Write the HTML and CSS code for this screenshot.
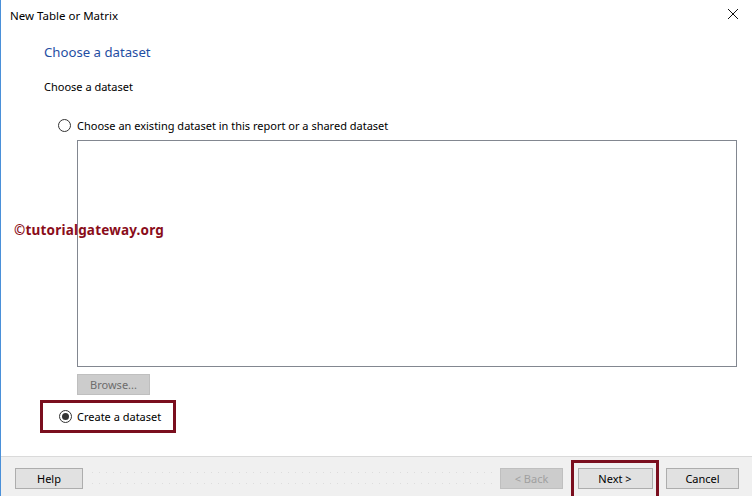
FILE: index.html
```html
<!DOCTYPE html>
<html>
<head>
<meta charset="utf-8">
<link rel="stylesheet" href="styles.css">
</head>
<body>
<div class="dialog">
  <div class="titlebar">
    <span class="title">New Table or Matrix</span>
    <svg class="close" width="12" height="12" viewBox="0 0 12 12"><path d="M1 1 L11 11 M11 1 L1 11" stroke="#111" stroke-width="1" fill="none"/></svg>
  </div>
  <div class="content">
    <div class="heading">Choose a dataset</div>
    <div class="sub">Choose a dataset</div>
    <div class="opt opt1">
      <span class="radio"></span>
      <span class="label">Choose an existing dataset in this report or a shared dataset</span>
    </div>
    <div class="listbox"></div>
    <div class="browse">Browse...</div>
    <div class="redbox">
      <span class="radio checked"></span>
      <span class="label">Create a dataset</span>
    </div>
    <div class="watermark">©tutorialgateway.org</div>
  </div>
  <div class="footer">
    <div class="btn help">Help</div>
    <div class="dots"></div>
    <div class="btn back disabled">&lt; Back</div>
    <div class="nextwrap"><div class="btn next">Next &gt;</div></div>
    <div class="btn cancel">Cancel</div>
  </div>
</div>
</body>
</html>
```
FILE: styles.css
```css
html, body { margin: 0; padding: 0; }
body { width: 752px; height: 496px; overflow: hidden; background: #fff; font-family: "Noto Sans", "Open Sans", sans-serif; color: #000; }
.dialog { width: 752px; height: 496px; display: flex; flex-direction: column; box-sizing: border-box; border-left: 1px solid #4a90d9; position: relative; }
.titlebar { height: 30px; flex: none; display: flex; align-items: center; justify-content: space-between; padding: 0 13px 0 9px; }
.title { font-size: 11.5px; }
.close { display: block; margin-top: -2px; }
.content { flex: 1; position: relative; padding: 13px 0 0 43px; }
.heading { font-size: 13.2px; color: #1f4ea3; line-height: 18px; }
.sub { font-size: 11px; margin-top: 19px; line-height: 14px; }
.opt { display: flex; align-items: center; }
.opt1 { margin-top: 23px; margin-left: 14px; height: 16px; }
.radio { width: 11px; height: 11px; border: 1px solid #333; border-radius: 50%; box-sizing: content-box; display: inline-flex; align-items: center; justify-content: center; background: #fff; }
.radio.checked::after { content: ""; width: 7px; height: 7px; border-radius: 50%; background: #333; }
.label { font-size: 11px; margin-left: 6px; }
.listbox { margin: 7px 0 0 33px; width: 660px; height: 227px; border: 1px solid #828790; box-sizing: border-box; }
.browse { margin: 7px 0 0 33px; width: 73px; height: 21px; background: #cccccc; border: 1px solid #bfbfbf; box-sizing: border-box; color: #6d6d6d; font-size: 11px; display: flex; align-items: center; justify-content: center; }
.redbox { margin: 5px 0 0 -4px; width: 136px; height: 33px; border: 3px solid #7a0e1e; box-sizing: border-box; display: flex; align-items: center; padding-left: 16px; }
.redbox .label { margin-left: 5px; }
.watermark { position: absolute; left: 13px; top: 191px; font-weight: bold; font-size: 13.5px; color: #8a0d1a; letter-spacing: 0.2px; }
.footer { height: 40px; flex: none; background: #f0f0f0; border-top: 1px solid #dadada; display: flex; align-items: flex-start; padding: 11px 0 0 14px; box-sizing: border-box; }
.btn { height: 21px; border: 1px solid #adadad; background: #e1e1e1; box-sizing: border-box; font-size: 11px; display: flex; align-items: center; justify-content: center; }
.help { width: 68px; }
.dots { flex: 1; height: 26px; margin: -4px 6px 0; background-image: radial-gradient(circle, #d8d8d8 0.6px, transparent 0.8px); background-size: 7px 11px; background-position: 0 3px; opacity: 0.8; }
.back { width: 63px; color: #a0a0a0; background: #cccccc; border-color: #bfbfbf; }
.nextwrap { margin: -8px 0 0 8px; width: 88px; height: 40px; border: 3px solid #7a0e1e; border-bottom: none; box-sizing: border-box; display: flex; align-items: flex-start; justify-content: center; padding-top: 5px; }
.next { width: 75px; }
.cancel { width: 73px; margin-left: 7px; margin-right: 13px; }
```
